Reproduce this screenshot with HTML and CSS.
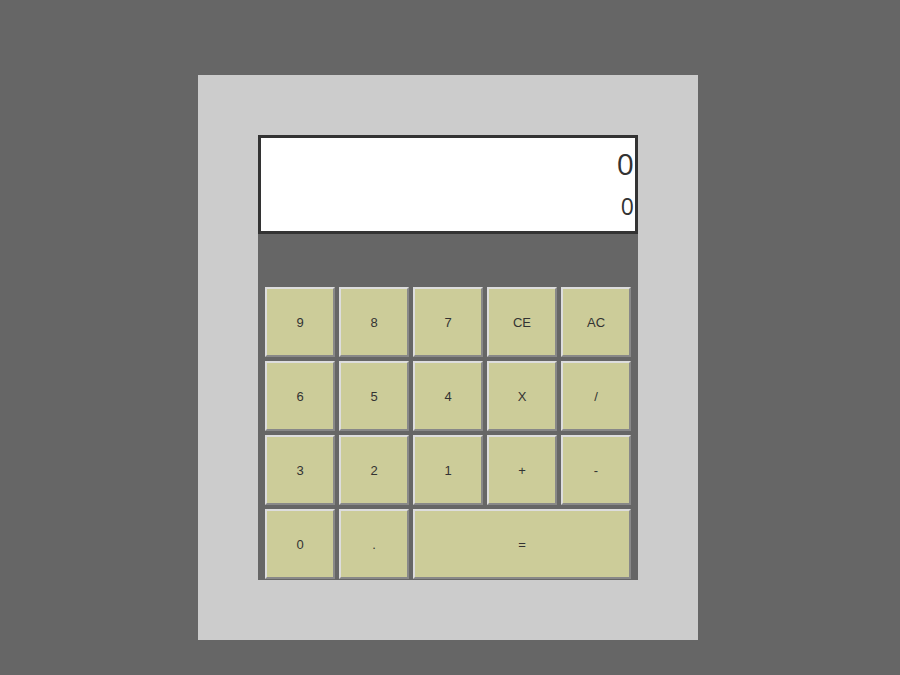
FILE: index.html
```html
<!DOCTYPE html>
<html>
<head>
<meta charset="utf-8">
<link rel="stylesheet" href="styles.css">
</head>
<body>
<div class="calc">
  <div class="display">
    <div class="result">0</div>
    <div class="history">0</div>
  </div>
  <div class="keypad">
    <button class="key">9</button>
    <button class="key">8</button>
    <button class="key">7</button>
    <button class="key">CE</button>
    <button class="key">AC</button>
    <button class="key">6</button>
    <button class="key">5</button>
    <button class="key">4</button>
    <button class="key">X</button>
    <button class="key">/</button>
    <button class="key">3</button>
    <button class="key">2</button>
    <button class="key">1</button>
    <button class="key">+</button>
    <button class="key">-</button>
    <button class="key">0</button>
    <button class="key">.</button>
    <button class="key wide">=</button>
  </div>
</div>
</body>
</html>
```
FILE: styles.css
```css
html, body {
  margin: 0;
  padding: 0;
}
body {
  background: #666666;
  width: 900px;
  height: 675px;
  font-family: "Liberation Sans", Arial, sans-serif;
}
.calc {
  box-sizing: border-box;
  width: 500px;
  height: 565px;
  margin: 75px 0 0 198px;
  padding: 60px;
  background: #cccccc;
  display: flex;
  flex-direction: column;
}
.display {
  box-sizing: border-box;
  height: 99px;
  border: 3px solid #333333;
  background: #ffffff;
  color: #333333;
  font-family: "Open Sans", sans-serif;
  text-align: right;
  padding: 6px 1px 0 0;
}
.result {
  font-size: 30px;
  line-height: 40px;
}
.history {
  margin-top: 6px;
  font-size: 23px;
  line-height: 32px;
}
.keypad {
  flex: 1;
  background: #666666;
  display: grid;
  grid-template-columns: repeat(5, 70px);
  grid-auto-rows: 70px;
  gap: 4px;
  padding: 53px 7px 1px 7px;
  align-content: start;
}
.key {
  box-sizing: border-box;
  margin: 0;
  background: #cccc99;
  border: 2px solid;
  border-color: #dddddd #888888 #888888 #dddddd;
  font-family: "Liberation Sans", Arial, sans-serif;
  font-size: 13px;
  color: #333333;
  padding: 0;
}
.wide {
  grid-column: span 3;
}
```
